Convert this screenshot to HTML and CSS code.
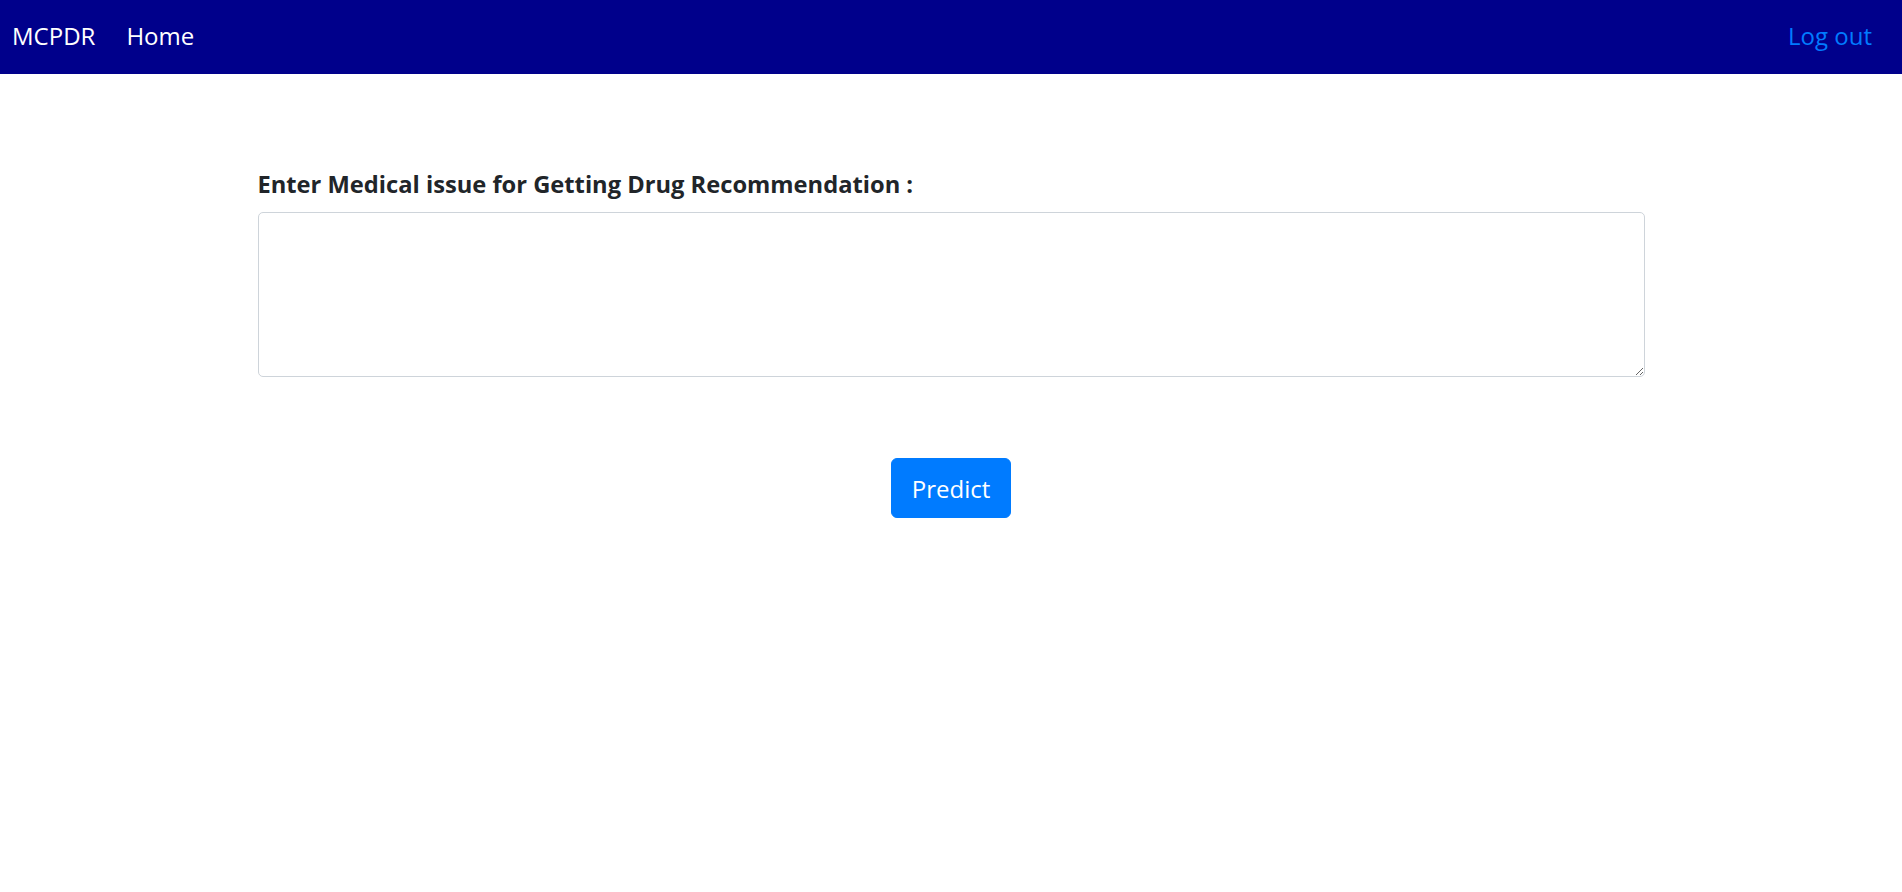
FILE: index.html
```html
<!DOCTYPE html>
<html lang="en">
<head>
<meta charset="utf-8">
<title>MCPDR</title>
<link rel="stylesheet" href="styles.css">
</head>
<body>
<nav class="navbar">
  <div class="nav-left">
    <a class="brand" href="#">MCPDR</a>
    <a class="nav-link" href="#">Home</a>
  </div>
  <a class="logout" href="#">Log out</a>
</nav>
<main class="container">
  <form class="form">
    <label class="label" for="issue">Enter Medical issue for Getting Drug Recommendation :</label>
    <textarea id="issue" class="textarea"></textarea>
    <div class="actions">
      <button type="button" class="btn">Predict</button>
    </div>
  </form>
</main>
</body>
</html>
```
FILE: styles.css
```css
* { box-sizing: border-box; }
html, body { margin: 0; padding: 0; }
body {
  font-family: "Open Sans", "Noto Sans", sans-serif;
  color: #212529;
  background: #fff;
}
a { text-decoration: none; }
.navbar {
  height: 74px;
  background: #00008b;
  display: flex;
  align-items: center;
  justify-content: space-between;
  padding: 0 30px 2px 12px;
}
.nav-left {
  display: flex;
  align-items: center;
  gap: 31px;
}
.brand, .nav-link {
  color: #fff;
  font-size: 24px;
  line-height: 36px;
}
.logout {
  color: #007bff;
  font-size: 24px;
  line-height: 36px;
}
.container {
  width: 1387px;
  margin: 0 auto;
  padding-top: 92px;
}
.form {
  display: flex;
  flex-direction: column;
}
.label {
  font-weight: 700;
  font-size: 23.7px;
  line-height: 36px;
  margin-bottom: 10px;
}
.textarea {
  width: 100%;
  height: 165px;
  border: 1px solid #ced4da;
  border-radius: 5px;
  padding: 8px 15px;
  font-family: inherit;
  font-size: 20px;
  resize: vertical;
  outline: none;
}
.actions {
  display: flex;
  justify-content: center;
  margin-top: 81px;
}
.btn {
  height: 60px;
  padding: 0 20px;
  border: 1px solid #007bff;
  background: #007bff;
  color: #fff;
  border-radius: 6px;
  font-family: inherit;
  font-size: 24px;
  cursor: pointer;
}
```
